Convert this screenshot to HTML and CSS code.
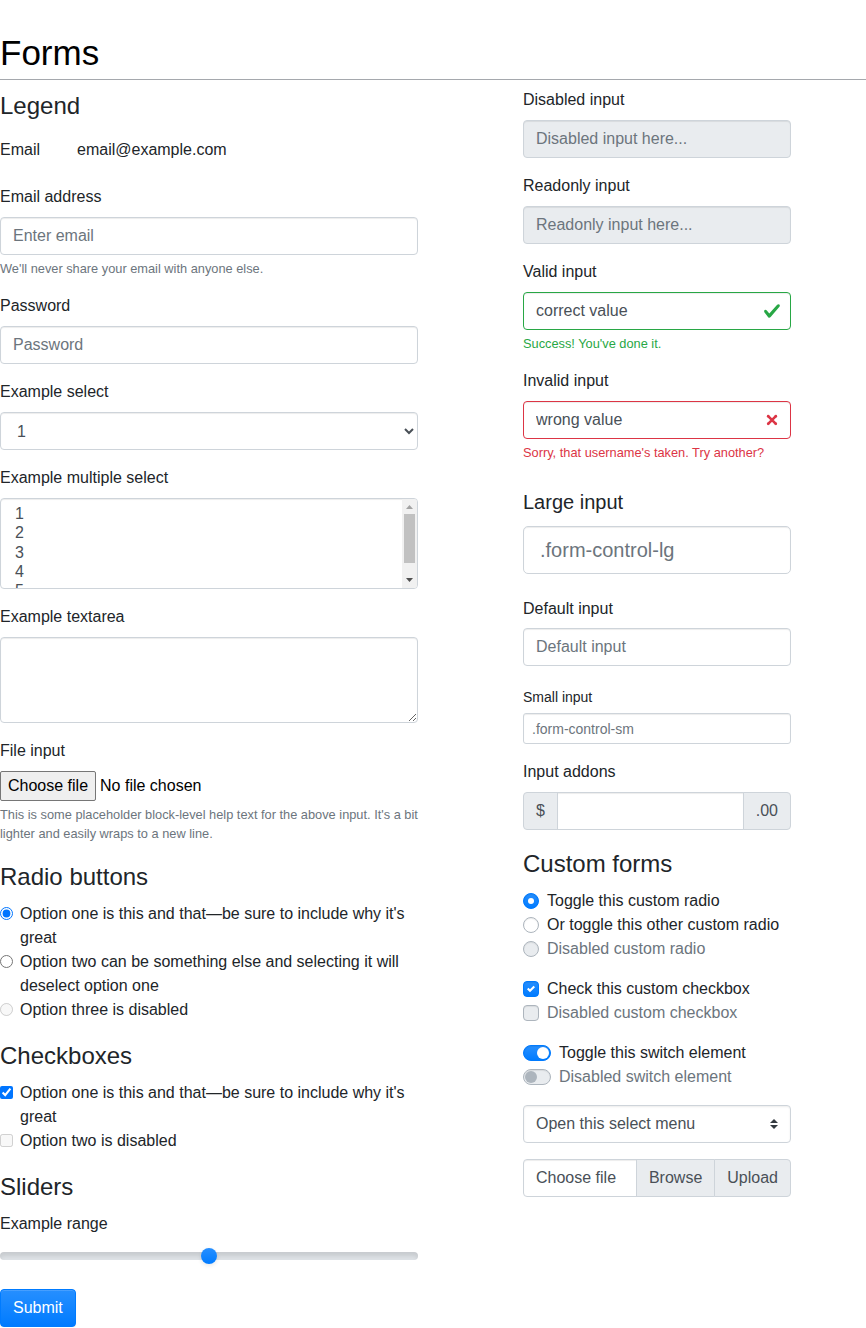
FILE: index.html
```html
<!DOCTYPE html>
<html lang="en">
<head>
<meta charset="utf-8">
<title>Forms</title>
<link rel="stylesheet" href="styles.css">
</head>
<body>
<h1 class="page-title">Forms</h1>
<div class="layout">
  <form class="col col-left">
    <div class="legend legend-first">Legend</div>
    <div class="form-group static-row">
      <label class="col-form-label">Email</label>
      <div class="plaintext">email@example.com</div>
    </div>
    <div class="form-group">
      <label class="lbl">Email address</label>
      <input class="form-control" type="email" placeholder="Enter email">
      <small class="form-text">We'll never share your email with anyone else.</small>
    </div>
    <div class="form-group">
      <label class="lbl">Password</label>
      <input class="form-control" type="password" placeholder="Password">
    </div>
    <div class="form-group">
      <label class="lbl">Example select</label>
      <select class="form-control">
        <option>1</option><option>2</option><option>3</option><option>4</option><option>5</option>
      </select>
    </div>
    <div class="form-group">
      <label class="lbl">Example multiple select</label>
      <div class="multi-wrap">
        <select class="form-control multi" multiple>
          <option>1</option><option>2</option><option>3</option><option>4</option><option>5</option>
        </select>
        <div class="fake-scroll" aria-hidden="true">
          <span class="sb-btn"><svg width="7" height="4" viewBox="0 0 7 4"><path d="M3.5 0L7 4H0z" fill="#a3a3a3"/></svg></span>
          <span class="sb-track"><span class="sb-thumb"></span></span>
          <span class="sb-btn"><svg width="7" height="4" viewBox="0 0 7 4"><path d="M0 0h7L3.5 4z" fill="#505050"/></svg></span>
        </div>
      </div>
    </div>
    <div class="form-group">
      <label class="lbl">Example textarea</label>
      <textarea class="form-control textarea" rows="3"></textarea>
    </div>
    <div class="form-group">
      <label class="lbl">File input</label>
      <label class="file-input">
        <span class="file-btn">Choose file</span>
        <span class="file-status">No file chosen</span>
      </label>
      <small class="form-text">This is some placeholder block-level help text for the above input. It's a bit lighter and easily wraps to a new line.</small>
    </div>
    <div class="form-group">
      <div class="legend">Radio buttons</div>
      <label class="form-check"><input type="radio" name="r" checked><span>Option one is this and that—be sure to include why it's great</span></label>
      <label class="form-check"><input type="radio" name="r"><span>Option two can be something else and selecting it will deselect option one</span></label>
      <label class="form-check disabled"><input type="radio" name="r" disabled><span>Option three is disabled</span></label>
    </div>
    <div class="form-group">
      <div class="legend">Checkboxes</div>
      <label class="form-check"><input type="checkbox" checked><span>Option one is this and that—be sure to include why it's great</span></label>
      <label class="form-check disabled"><input type="checkbox" disabled><span>Option two is disabled</span></label>
    </div>
    <div class="form-group range-group">
      <div class="legend">Sliders</div>
      <label class="lbl">Example range</label>
      <input class="custom-range" type="range" min="0" max="100" value="50">
    </div>
    <button class="btn-primary" type="button">Submit</button>
  </form>

  <div class="col col-right">
    <div class="form-group">
      <label class="lbl">Disabled input</label>
      <input class="form-control" type="text" placeholder="Disabled input here..." disabled>
    </div>
    <div class="form-group">
      <label class="lbl">Readonly input</label>
      <input class="form-control readonly" type="text" placeholder="Readonly input here..." readonly>
    </div>
    <div class="form-group">
      <label class="lbl">Valid input</label>
      <div class="validated">
        <input class="form-control is-valid" type="text" value="correct value">
        <svg class="state-icon" width="18" height="18" viewBox="0 0 8 8"><path fill="#28a745" d="M2.3 6.73L.6 4.53c-.4-1.04.46-1.4 1.1-.8l1.1 1.4 3.4-3.8c.6-.63 1.6-.27 1.2.7l-4 4.6c-.43.5-.8.4-1.1.1z"/></svg>
      </div>
      <div class="valid-feedback">Success! You've done it.</div>
    </div>
    <div class="form-group">
      <label class="lbl">Invalid input</label>
      <div class="validated">
        <input class="form-control is-invalid" type="text" value="wrong value">
        <svg class="state-icon" width="18" height="18" viewBox="-2 -2 7 7" fill="#dc3545"><path stroke="#dc3545" d="M0 0l3 3m0-3L0 3"/><circle r=".5"/><circle cx="3" r=".5"/><circle cy="3" r=".5"/><circle cx="3" cy="3" r=".5"/></svg>
      </div>
      <div class="invalid-feedback">Sorry, that username's taken. Try another?</div>
    </div>
    <div class="form-group">
      <label class="col-form-label-lg">Large input</label>
      <input class="form-control form-control-lg" type="text" placeholder=".form-control-lg">
    </div>
    <div class="form-group">
      <label class="col-form-label">Default input</label>
      <input class="form-control" type="text" placeholder="Default input">
    </div>
    <div class="form-group">
      <label class="col-form-label-sm">Small input</label>
      <input class="form-control form-control-sm" type="text" placeholder=".form-control-sm">
    </div>
    <div class="form-group">
      <label class="lbl">Input addons</label>
      <div class="input-group">
        <span class="addon addon-left">$</span>
        <input class="form-control group-input" type="text">
        <span class="addon addon-right">.00</span>
      </div>
    </div>
    <div class="form-group">
      <div class="legend">Custom forms</div>
      <div class="custom-control">
        <span class="radio-ind checked"><span class="dot"></span></span><span>Toggle this custom radio</span>
      </div>
      <div class="custom-control">
        <span class="radio-ind"></span><span>Or toggle this other custom radio</span>
      </div>
      <div class="custom-control disabled">
        <span class="radio-ind disabled-ind"></span><span>Disabled custom radio</span>
      </div>
    </div>
    <div class="form-group">
      <div class="custom-control">
        <span class="check-ind checked"><svg width="8" height="8" viewBox="0 0 8 8"><path fill="#fff" d="M6.564.75l-3.59 3.612-1.538-1.55L0 4.26l2.974 2.99L8 2.193z"/></svg></span><span>Check this custom checkbox</span>
      </div>
      <div class="custom-control disabled">
        <span class="check-ind disabled-ind"></span><span>Disabled custom checkbox</span>
      </div>
    </div>
    <div class="form-group">
      <div class="custom-control">
        <span class="switch-ind checked"><span class="knob"></span></span><span>Toggle this switch element</span>
      </div>
      <div class="custom-control disabled">
        <span class="switch-ind disabled-ind"><span class="knob"></span></span><span>Disabled switch element</span>
      </div>
    </div>
    <div class="form-group">
      <div class="select-wrap">
        <select class="custom-select">
          <option>Open this select menu</option>
          <option>One</option>
          <option>Two</option>
          <option>Three</option>
        </select>
        <svg class="select-arrow" width="8" height="10" viewBox="0 0 4 5"><path fill="#343a40" d="M2 0L0 2h4zm0 5L0 3h4z"/></svg>
      </div>
    </div>
    <div class="form-group">
      <div class="input-group file-group">
        <div class="custom-file">
          <span class="file-name">Choose file</span>
          <span class="file-browse">Browse</span>
        </div>
        <span class="file-upload">Upload</span>
      </div>
    </div>
  </div>
</div>
</body>
</html>
```

FILE: styles.css
```css
* { box-sizing: border-box; }

html, body {
  margin: 0;
  padding: 0;
  background: #fff;
}

body {
  font-family: "Liberation Sans", Arial, sans-serif;
  font-size: 16px;
  line-height: 1.5;
  color: #212529;
}

.page-title {
  margin: 0;
  padding: 31px 0 5px;
  font-size: 35px;
  line-height: 43px;
  font-weight: 400;
  color: #000;
  border-bottom: 1px solid #a5a8ad;
}

.layout {
  display: grid;
  grid-template-columns: 418px 268px;
  column-gap: 105px;
  padding-top: 8px;
  align-items: start;
}

.col { margin: 0; }

.legend {
  font-size: 24px;
  line-height: 36px;
  margin-bottom: 7px;
}

.form-group { margin-bottom: 16px; }

.lbl {
  display: inline-block;
  margin-bottom: 8px;
  line-height: 24px;
}

.static-row {
  display: grid;
  grid-template-columns: 77px 1fr;
}

.col-form-label {
  display: block;
  padding: 7px 0;
  line-height: 24px;
}

.col-form-label-lg {
  display: block;
  padding: 9px 0;
  font-size: 20px;
  line-height: 30px;
}

.col-form-label-sm {
  display: block;
  padding: 5px 0;
  font-size: 14px;
  line-height: 21px;
}

.plaintext {
  padding: 7px 0;
  line-height: 24px;
}

.form-control {
  display: block;
  width: 100%;
  height: 38px;
  padding: 6px 12px;
  font-family: inherit;
  font-size: 16px;
  line-height: 24px;
  color: #495057;
  background: #fff;
  border: 1px solid #ced4da;
  border-radius: 4px;
  box-shadow: inset 0 1px 1px rgba(0, 0, 0, .075);
  margin: 0;
}

.form-control::placeholder { color: #6c757d; opacity: 1; }

.form-control:disabled,
.form-control.readonly {
  background: #e9ecef;
}

/* multiple select with drawn scrollbar */
.multi-wrap { position: relative; }

.form-control.multi {
  height: auto;
  overflow: hidden;
}

.fake-scroll {
  position: absolute;
  top: 1px;
  right: 1px;
  bottom: 1px;
  width: 15px;
  display: flex;
  flex-direction: column;
  background: #f1f1f1;
  border-radius: 0 3px 3px 0;
  pointer-events: none;
}

.sb-btn {
  flex: none;
  height: 15px;
  display: flex;
  align-items: center;
  justify-content: center;
}

.sb-track {
  flex: 1;
  display: flex;
  flex-direction: column;
}

.sb-thumb {
  height: 49px;
  margin: 0 2px;
  background: #c1c1c1;
}

.form-control.textarea {
  height: 86px;
  resize: vertical;
}

.form-control-lg {
  height: 48px;
  padding: 8px 16px;
  font-size: 20px;
  line-height: 30px;
  border-radius: 5px;
}

.form-control-sm {
  height: 31px;
  padding: 4px 8px;
  font-size: 14px;
  line-height: 21px;
  border-radius: 3px;
}

.form-text {
  display: block;
  margin-top: 4px;
  font-size: 12.8px;
  line-height: 19.2px;
  color: #6c757d;
}

/* file input */
.file-input {
  display: flex;
  align-items: center;
  width: 100%;
  font-size: 16px;
}

.file-btn {
  display: inline-block;
  padding: 5px 7px;
  line-height: 18px;
  color: #000;
  background: #efefef;
  border: 1px solid #767676;
  border-radius: 2px;
}

.file-status {
  margin-left: 4px;
  color: #000;
}

.form-check {
  display: flex;
  align-items: flex-start;
  line-height: 24px;
}

.form-check input {
  flex: none;
  width: 13px;
  height: 13px;
  margin: 5px 7px 0 0;
}

.range-group { margin-bottom: 22px; }

.custom-range {
  display: block;
  width: 100%;
  height: 22.4px;
  padding: 0;
  margin: 0;
  background: transparent;
  -webkit-appearance: none;
  appearance: none;
}

.custom-range::-webkit-slider-runnable-track {
  height: 8px;
  background: #dee2e6;
  border-radius: 16px;
  box-shadow: inset 0 4px 4px rgba(0, 0, 0, .1);
}

.custom-range::-webkit-slider-thumb {
  -webkit-appearance: none;
  width: 16px;
  height: 16px;
  margin-top: -4px;
  border: 0;
  border-radius: 16px;
  background: linear-gradient(180deg, #268fff, #007bff);
  box-shadow: 0 1.6px 4px rgba(0, 0, 0, .1);
}

.btn-primary {
  display: inline-block;
  padding: 6px 12px;
  font-family: inherit;
  font-size: 16px;
  line-height: 24px;
  color: #fff;
  background: #007bff linear-gradient(180deg, #268fff, #007bff) repeat-x;
  border: 1px solid #007bff;
  border-radius: 4px;
  box-shadow: inset 0 1px 0 rgba(255, 255, 255, .15), 0 1px 1px rgba(0, 0, 0, .075);
  cursor: pointer;
}

/* validation */
.validated { position: relative; }

.form-control.is-valid {
  border-color: #28a745;
  padding-right: 36px;
}

.form-control.is-invalid {
  border-color: #dc3545;
  padding-right: 36px;
}

.state-icon {
  position: absolute;
  right: 10px;
  top: 10px;
  pointer-events: none;
}

.valid-feedback,
.invalid-feedback {
  margin-top: 4px;
  font-size: 12.8px;
  line-height: 19.2px;
}

.valid-feedback { color: #28a745; }
.invalid-feedback { color: #dc3545; }

/* input group */
.input-group {
  display: flex;
  align-items: stretch;
  width: 100%;
}

.addon {
  display: flex;
  align-items: center;
  padding: 6px 12px;
  line-height: 24px;
  color: #495057;
  background: #e9ecef;
  border: 1px solid #ced4da;
}

.addon-left {
  border-radius: 4px 0 0 4px;
  margin-right: -1px;
}

.addon-right {
  border-radius: 0 4px 4px 0;
  margin-left: -1px;
}

.group-input {
  flex: 1;
  width: auto;
  min-width: 0;
  border-radius: 0;
}

/* custom controls */
.custom-control {
  display: flex;
  align-items: flex-start;
  min-height: 24px;
  line-height: 24px;
}

.custom-control.disabled { color: #6c757d; }

.radio-ind,
.check-ind {
  flex: none;
  width: 16px;
  height: 16px;
  margin: 4px 8px 0 0;
  background: #fff;
  border: 1px solid #adb5bd;
  box-shadow: inset 0 1px 1px rgba(0, 0, 0, .075);
  display: flex;
  align-items: center;
  justify-content: center;
}

.radio-ind { border-radius: 50%; }
.check-ind { border-radius: 4px; }

.radio-ind.checked,
.check-ind.checked {
  border-color: #007bff;
  background: #007bff linear-gradient(180deg, #268fff, #007bff);
}

.dot {
  width: 6px;
  height: 6px;
  border-radius: 50%;
  background: #fff;
}

.disabled-ind {
  background: #e9ecef;
}

.switch-ind {
  flex: none;
  width: 28px;
  height: 16px;
  margin: 4px 8px 0 0;
  padding: 1px;
  border: 1px solid #adb5bd;
  border-radius: 8px;
  background: #fff;
  box-shadow: inset 0 1px 1px rgba(0, 0, 0, .075);
  display: flex;
  align-items: center;
  justify-content: flex-start;
}

.switch-ind .knob {
  width: 12px;
  height: 12px;
  border-radius: 50%;
  background: #adb5bd;
}

.switch-ind.checked {
  justify-content: flex-end;
  border-color: #007bff;
  background: #007bff linear-gradient(180deg, #268fff, #007bff);
}

.switch-ind.checked .knob { background: #fff; }

.switch-ind.disabled-ind { background: #e9ecef; }

/* custom select */
.select-wrap { position: relative; }

.custom-select {
  display: block;
  width: 100%;
  height: 38px;
  padding: 6px 28px 6px 12px;
  font-family: inherit;
  font-size: 16px;
  line-height: 24px;
  color: #495057;
  background: #fff;
  border: 1px solid #ced4da;
  border-radius: 4px;
  box-shadow: inset 0 1px 2px rgba(0, 0, 0, .075);
  -webkit-appearance: none;
  appearance: none;
  margin: 0;
}

.select-arrow {
  position: absolute;
  right: 13px;
  top: 14px;
  pointer-events: none;
}

/* custom file */
.file-group { height: 38px; }

.custom-file {
  flex: 1;
  display: flex;
  border: 1px solid #ced4da;
  border-radius: 4px 0 0 4px;
  background: #fff;
  box-shadow: inset 0 1px 1px rgba(0, 0, 0, .075);
  overflow: hidden;
}

.file-name {
  flex: 1;
  padding: 6px 12px;
  line-height: 24px;
  color: #495057;
}

.file-browse {
  padding: 6px 12px;
  line-height: 24px;
  color: #495057;
  background: #e9ecef;
  border-left: 1px solid #ced4da;
}

.file-upload {
  padding: 6px 12px;
  line-height: 24px;
  color: #495057;
  background: #e9ecef;
  border: 1px solid #ced4da;
  border-radius: 0 4px 4px 0;
  margin-left: -1px;
}
```
